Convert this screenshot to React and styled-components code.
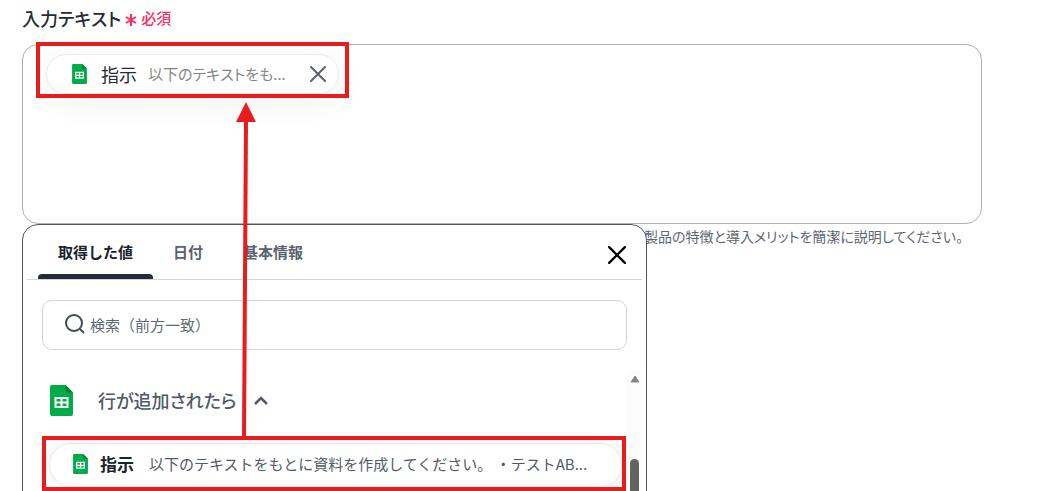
import React, { useState } from "react";
import styled, { createGlobalStyle, css } from "styled-components";

const GlobalStyle = createGlobalStyle`
	*, *::before, *::after {
		box-sizing: border-box;
	}
	body {
		margin: 0;
		background: #ffffff;
		color: #252b37;
		font-family: "Noto Sans CJK JP", sans-serif;
		font-kerning: none;
	}
	button, input {
		font-family: inherit;
	}
`;

const Page = styled.main`
	position: relative;
	height: 100vh;
	overflow: hidden;
	padding: 4px 56px 0 22px;
`;

const FieldLabel = styled.div`
	display: flex;
	align-items: center;
	gap: 4px;
	height: 28px;
	font-size: 18px;
	font-weight: 500;
	line-height: 28px;
	font-feature-settings: "palt";
`;

const Required = styled.span`
	display: flex;
	align-items: center;
	gap: 4px;
	color: #f92f60;
	font-size: 15px;

	svg {
		margin-top: 4px;
	}
`;

const Editor = styled.div`
	display: flex;
	align-items: flex-start;
	height: 180px;
	margin-top: 12px;
	padding: 9px 23px;
	border: 1px solid #a9b1bb;
	border-radius: 16px;
	outline: none;
`;

const Marked = styled.div`
	position: relative;

	&::after {
		content: "";
		position: absolute;
		inset: ${(p) => p.$inset};
		border: 4px solid #e81c1c;
		pointer-events: none;
	}
`;

const Chip = styled.div`
	display: flex;
	align-items: center;
	height: 40px;
	padding: 0 12px 0 25px;
	border: 1px solid #e7eaf2;
	border-radius: 20px;
	background: #ffffff;
	box-shadow: 0 8px 32px rgba(0, 0, 0, 0.06);
`;

const ChipName = styled.span`
	margin-left: 14px;
	color: #252b37;
	font-size: 18px;
	line-height: 28px;
`;

const ChipText = styled.span`
	margin: 0 24px 0 11px;
	color: #858585;
	font-size: 15px;
	line-height: 24px;
	font-feature-settings: "palt";
`;

const IconButton = styled.button`
	display: flex;
	align-items: center;
	justify-content: center;
	width: ${(p) => p.$size}px;
	height: ${(p) => p.$size}px;
	padding: 0;
	border: 0;
	background: none;
	color: ${(p) => p.$color};
	cursor: pointer;
`;

const PickerAnchor = styled.div`
	position: relative;
`;

const Hint = styled.p`
	margin: 0;
	padding-right: 19px;
	color: #5d6672;
	font-size: 14px;
	line-height: 24px;
	text-align: right;
	font-feature-settings: "palt";
`;

const Picker = styled.section`
	position: absolute;
	top: 0;
	left: 0;
	width: calc(65% + 1px);
	padding: 0 4px;
	border: 1px solid #4d5563;
	border-radius: 16px;
	background: #ffffff;
`;

const PickerHead = styled.div`
	display: flex;
	align-items: flex-end;
	justify-content: space-between;
	height: 55px;
	padding: 0 15px 0 11px;
	border-bottom: 1px solid #cfd5e0;
`;

const CloseSlot = styled.div`
	padding-bottom: 14px;
`;

const Tabs = styled.div`
	display: flex;
`;

const Tab = styled.button`
	display: flex;
	flex-direction: column;
	justify-content: space-between;
	height: 54px;
	padding: 15px 0 0;
	border: 0;
	background: none;
	color: #5a626e;
	font-size: 15px;
	font-weight: 700;
	line-height: 24px;
	cursor: pointer;

	span {
		padding: 0 20px;
	}

	&::after {
		content: "";
		width: 100%;
		height: 5px;
		border-radius: 4px 4px 0 0;
	}

	${(p) =>
		p.$active &&
		css`
			color: #1c222c;

			&::after {
				background: #252b37;
			}
		`}
`;

const SearchBox = styled.label`
	display: flex;
	align-items: center;
	gap: 3px;
	height: 50px;
	margin: 20px 15px 0;
	padding: 0 20px;
	border: 1px solid #cfd5e0;
	border-radius: 10px;
	color: #404955;
`;

const SearchInput = styled.input`
	flex: 1;
	min-width: 0;
	padding: 0;
	border: 0;
	outline: none;
	background: none;
	color: #252b37;
	font-size: 15px;
	line-height: 24px;

	&::placeholder {
		color: #5f6875;
		opacity: 1;
	}
`;

const Results = styled.div`
	display: flex;
	height: 160px;
	margin-top: 20px;
`;

const ResultList = styled.div`
	flex: 1;
	min-width: 0;
	padding: 0 5px 0 22px;
`;

const GroupToggle = styled.button`
	display: flex;
	align-items: center;
	height: 60px;
	margin-bottom: 13px;
	padding: 0 1px;
	border: 0;
	background: none;
	color: #525a67;
	font-size: 18px;
	font-weight: 500;
	line-height: 28px;
	font-feature-settings: "palt";
	cursor: pointer;
`;

const GroupName = styled.span`
	margin: 0 17px 0 25px;
`;

const Row = styled.button`
	display: flex;
	align-items: center;
	width: 100%;
	height: 44px;
	padding: 0 30px 2px 23px;
	border: 1px solid #e7eaf2;
	border-radius: 22px;
	background: #ffffff;
	box-shadow: 0 0 16px rgba(0, 0, 0, 0.08);
	text-align: left;
	cursor: pointer;
`;

const RowName = styled.span`
	margin-left: 12px;
	color: #1c222c;
	font-size: 17px;
	font-weight: 700;
	line-height: 26px;
`;

const RowText = styled.span`
	margin-left: 15px;
	overflow: hidden;
	color: #525a67;
	font-size: 15px;
	line-height: 24px;
	white-space: pre;
`;

const Track = styled.div`
	display: flex;
	flex-direction: column;
	align-items: center;
	gap: 76px;
	width: 15px;
	padding-top: 5px;
	background: #fcfcfc;
`;

const Thumb = styled.div`
	flex: 1;
	width: 9px;
	border-radius: 5px;
	background: #636363;
`;

const Arrow = styled.svg`
	position: absolute;
	top: 102px;
	left: 236px;
	pointer-events: none;
`;

function SheetIcon({ width, height }) {
	return (
		<svg width={width} height={height} viewBox="0 0 23 31" aria-hidden="true">
			<path d="M2 0h13.500L23 7.500V29a2 2 0 0 1-2 2H2a2 2 0 0 1-2-2V2a2 2 0 0 1 2-2z" fill="#00ac47" />
			<path d="M15.500 0L23 7.500h-5.500a2 2 0 0 1-2-2z" fill="#00832d" />
			<path d="M4.500 12h14v11h-14zM6.500 14v2.500h4V14zM12.500 14v2.500h4V14zM6.500 18.500V21h4v-2.500zM12.500 18.500V21h4v-2.500z" fill="#fff" fillRule="evenodd" />
		</svg>
	);
}

function CrossIcon({ size, stroke }) {
	return (
		<svg width={size} height={size} viewBox="0 0 16 16" aria-hidden="true">
			<path d="M1 1L15 15M15 1L1 15" stroke="currentColor" strokeWidth={stroke} strokeLinecap="round" />
		</svg>
	);
}

const tabs = ["取得した値", "日付", "基本情報"];

function App() {
	const [activeTab, setActiveTab] = useState(tabs[0]);
	const [keyword, setKeyword] = useState("");
	const [open, setOpen] = useState(true);

	return (
		<Page>
			<GlobalStyle />
			<FieldLabel>
				<span id="input-text">入力テキスト</span>
				<Required>
					<svg width="12" height="14" viewBox="0 0 12 14" aria-hidden="true">
						<path d="M6 1v12M1 4l10 6M11 4L1 10" stroke="currentColor" strokeWidth="2" />
					</svg>
					必須
				</Required>
			</FieldLabel>

			<Editor role="textbox" aria-labelledby="input-text" tabIndex={0}>
				<Marked $inset="-12px -10px -4px">
					<Chip>
						<SheetIcon width={15} height={20} />
						<ChipName>指示</ChipName>
						<ChipText>以下のテキストをも...</ChipText>
						<IconButton $size={16} $color="#5a626e" aria-label="削除">
							<CrossIcon size={16} stroke={2} />
						</IconButton>
					</Chip>
				</Marked>
			</Editor>

			<PickerAnchor>
				<Hint>製品の特徴と導入メリットを簡潔に説明してください。</Hint>
				<Picker>
					<PickerHead>
						<Tabs role="tablist">
							{tabs.map((tab) => (
								<Tab
									key={tab}
									role="tab"
									aria-selected={tab === activeTab}
									$active={tab === activeTab}
									onClick={() => setActiveTab(tab)}
								>
									<span>{tab}</span>
								</Tab>
							))}
						</Tabs>
						<CloseSlot>
							<IconButton $size={20} $color="#000000" aria-label="閉じる">
								<CrossIcon size={18} stroke={2} />
							</IconButton>
						</CloseSlot>
					</PickerHead>

					<SearchBox>
						<svg width="24" height="24" viewBox="0 0 24 24" fill="none" aria-hidden="true">
							<circle cx="11" cy="10" r="8" stroke="currentColor" strokeWidth="2" />
							<path d="M17 16l4 4" stroke="currentColor" strokeWidth="2" />
						</svg>
						<SearchInput
							placeholder="検索（前方一致）"
							aria-label="検索（前方一致）"
							value={keyword}
							onChange={(e) => setKeyword(e.target.value)}
						/>
					</SearchBox>

					<Results>
						<ResultList>
							<GroupToggle aria-expanded={open} onClick={() => setOpen((prev) => !prev)}>
								<SheetIcon width={23} height={31} />
								<GroupName>行が追加されたら</GroupName>
								<svg width="16" height="12" viewBox="0 0 16 12" aria-hidden="true">
									<path d="M2 10l6-6 6 6" fill="none" stroke="currentColor" strokeWidth="2.500" />
								</svg>
							</GroupToggle>
							{open && (
								<Marked $inset="-7px -4px -4px -7px">
									<Row>
										<SheetIcon width={15} height={20} />
										<RowName>指示</RowName>
										<RowText>以下のテキストをもとに資料を作成してください。 ・テストAB...</RowText>
									</Row>
								</Marked>
							)}
						</ResultList>
						<Track>
							<svg width="10" height="8" viewBox="0 0 10 8" aria-hidden="true">
								<path d="M5 1L9 7H1z" fill="#858585" stroke="#858585" strokeLinejoin="round" />
							</svg>
							<Thumb />
						</Track>
					</Results>
				</Picker>
			</PickerAnchor>

			<Arrow width="20" height="336" viewBox="0 0 20 336" aria-hidden="true">
				<path d="M10 18L8 336" stroke="#e81c1c" strokeWidth="4" />
				<path d="M10 0L20 20H0z" fill="#e81c1c" />
			</Arrow>
		</Page>
	);
}

export default App;
